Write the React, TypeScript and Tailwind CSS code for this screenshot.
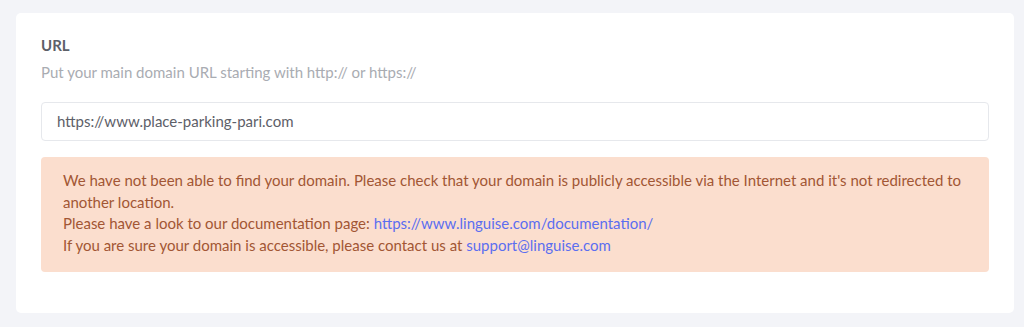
export default function App() {
  return (
    <div className="w-[1024px] h-[327px] bg-[#f3f4f8] pt-[13px] pl-[16px] pr-[10px]" style={{ fontFamily: "Lato, 'Noto Sans', sans-serif" }}>
      <div className="bg-white rounded-[5px] h-[300px] px-[25px] pt-[22px]">
        <div className="text-[15px] font-bold text-[#5d6068] leading-[20px]">URL</div>
        <div className="text-[15px] text-[#a9acb2] leading-[20px] mt-[7px]">Put your main domain URL starting with http:// or https://</div>
        <div className="mt-[20px] h-[39px] border border-[#e6e8ec] rounded-[4px] flex items-center px-[15px] text-[15px] text-[#5d6068]">
          https://www.place-parking-pari.com
        </div>
        <div className="mt-[16px] bg-[#fbdece] rounded-[4px] px-[22px] pt-[13px] pb-[15px] text-[15px] leading-[21.7px] text-[#a25634]">
          <div>We have not been able to find your domain. Please check that your domain is publicly accessible via the Internet and it's not redirected to another location.</div>
          <div>Please have a look to our documentation page: <span className="text-[#5b6ef0]">https://www.linguise.com/documentation/</span></div>
          <div>If you are sure your domain is accessible, please contact us at <span className="text-[#5b6ef0]">support@linguise.com</span></div>
        </div>
      </div>
    </div>
  );
}
